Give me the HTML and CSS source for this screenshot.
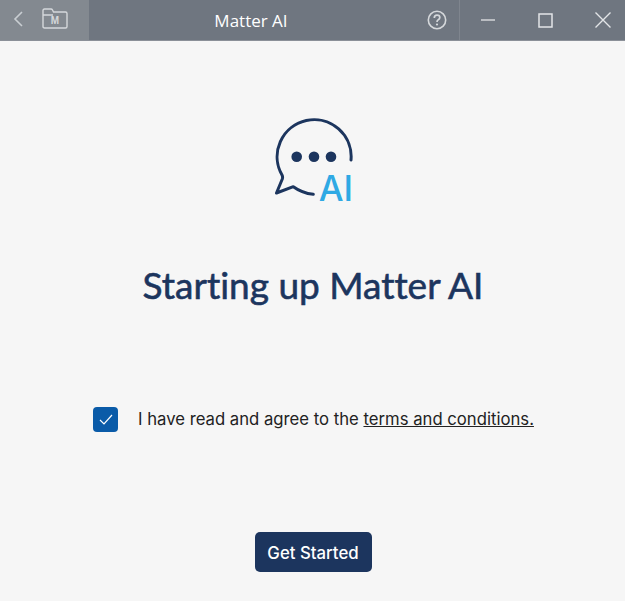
FILE: index.html
```html
<!DOCTYPE html>
<html lang="en">

<head>
    <meta charset="UTF-8">
    <meta name="viewport" content="width=device-width, initial-scale=1.0">
    <title>Matter AI</title>
    <link rel="stylesheet" href="styles.css">
</head>

<body>
    <div class="titlebar">
        <div class="titlebar-nav">
            <svg width="12" height="18" viewBox="0 0 12 18">
                <path d="M10 2 L3 9 L10 16" fill="none" stroke="#c9ced2" stroke-width="1.600" />
            </svg>
            <svg width="26" height="21" viewBox="0 0 26 21">
                <path d="M1 7 V2.500 Q1 1 2.500 1 H9 Q10 1 10.500 2 L11.500 4 H23.500 Q25 4 25 5.500 V18.500 Q25 20 23.500 20 H2.500 Q1 20 1 18.500 V7 H11" fill="none" stroke="#d5d8db" stroke-width="1.400" />
                <text x="13" y="15.500" class="folder-letter">M</text>
            </svg>
        </div>
        <div class="titlebar-title">Matter AI</div>
        <div class="titlebar-help">
            <svg width="20" height="20" viewBox="0 0 20 20">
                <circle cx="10" cy="10" r="8.700" fill="none" stroke="#d5d8db" stroke-width="1.600" />
                <path d="M7.300 7.900 Q7.300 5.200 10 5.200 Q12.800 5.200 12.800 7.500 Q12.800 8.900 11.300 9.700 Q10 10.400 10 12" fill="none" stroke="#d5d8db" stroke-width="1.700" />
                <circle cx="10" cy="14.500" r="1.100" fill="#d5d8db" />
            </svg>
        </div>
        <div class="titlebar-controls">
            <svg width="14" height="14" viewBox="0 0 14 14">
                <path d="M0 7 H14" stroke="#e3e5e7" stroke-width="1.300" />
            </svg>
            <svg width="15" height="15" viewBox="0 0 15 15">
                <rect x="1" y="1" width="13" height="13" fill="none" stroke="#e3e5e7" stroke-width="1.500" />
            </svg>
            <svg width="16" height="16" viewBox="0 0 16 16">
                <path d="M0.500 0.500 L15.500 15.500 M15.500 0.500 L0.500 15.500" stroke="#e3e5e7" stroke-width="1.400" />
            </svg>
        </div>
    </div>

    <div class="content">
        <div class="logo">
            <svg width="82" height="88" viewBox="0 0 82 88">
                <path d="M79 42 A37 37 0 1 0 10 57 Q11 59 10.300 61 L4.500 75 L21.300 68.700 Q30 75 41.300 76.300" fill="none" stroke="#1c355e" stroke-width="3" stroke-linecap="round" stroke-linejoin="round" />
                <circle cx="24.700" cy="38.700" r="5.300" fill="#1c355e" />
                <circle cx="42" cy="38.700" r="5.300" fill="#1c355e" />
                <circle cx="59" cy="38.700" r="5.300" fill="#1c355e" />
            </svg>
            <span class="logo-ai">AI</span>
        </div>

        <h1>Starting up Matter AI</h1>

        <div class="agree">
            <span class="checkbox">
                <svg width="14" height="11" viewBox="0 0 14 11">
                    <path d="M1 6 L5 10 L13 1" fill="none" stroke="#fff" stroke-width="1.200" />
                </svg>
            </span>
            <span>I have read and agree to the <a href="#">terms and conditions.</a></span>
        </div>

        <button class="start-button">Get Started</button>
    </div>
</body>

</html>
```

FILE: styles.css
```css
/* Reset and base styles */
* {
    box-sizing: border-box;
    margin: 0;
    padding: 0;
}

body {
    font-family: Inter, "Liberation Sans", sans-serif;
    color: #222;
    background-color: #f6f6f6;
    overflow: hidden;
}

/* Title bar */
.titlebar {
    display: flex;
    align-items: center;
    height: 41px;
    background-color: #6f7680;
    border-bottom: 1px solid #8b9098;
}

.titlebar-nav {
    display: flex;
    align-items: center;
    gap: 18px;
    width: 89px;
    height: 40px;
    padding-left: 12px;
    padding-bottom: 3px;
    background-color: #838990;
}

.folder-letter {
    font-family: "Liberation Sans", sans-serif;
    font-size: 10px;
    font-weight: 700;
    fill: #d5d8db;
    text-anchor: middle;
}

.titlebar-title {
    width: 324px;
    text-align: center;
    font-family: "Open Sans", sans-serif;
    font-size: 17px;
    color: #fff;
}

.titlebar-help {
    display: flex;
    align-items: center;
    width: 47px;
    height: 40px;
    padding-left: 14px;
    border-right: 1px solid #7f858e;
}

.titlebar-controls {
    display: flex;
    align-items: center;
    justify-content: space-between;
    flex: 1;
    padding: 0 14px 0 21px;
}

/* Content */
.content {
    display: flex;
    flex-direction: column;
    align-items: center;
    padding-top: 77px;
    padding-left: 1px;
}

.logo {
    position: relative;
    width: 82px;
    height: 88px;
}

.logo-ai {
    position: absolute;
    right: 1px;
    bottom: -2px;
    font-family: Inter, sans-serif;
    font-size: 35px;
    font-weight: 500;
    line-height: 40px;
    color: #2fa9e4;
}

h1 {
    margin-top: 55px;
    font-family: Lato, sans-serif;
    font-size: 37px;
    line-height: 48px;
    font-weight: 400;
    font-variant-ligatures: none;
    -webkit-text-stroke: 0.600px #1c355e;
    color: #1c355e;
}

/* Terms row */
.agree {
    display: flex;
    align-items: center;
    gap: 20px;
    width: 442px;
    margin-top: 97px;
    margin-left: 2px;
    font-size: 16.700px;
    line-height: 26px;
}

.agree a {
    color: inherit;
}

.checkbox {
    display: flex;
    align-items: center;
    justify-content: center;
    width: 25px;
    height: 25px;
    background-color: #0a5ba8;
    border-radius: 4px;
}

/* Button */
.start-button {
    margin-top: 100px;
    padding-top: 2px;
    width: 117px;
    height: 40px;
    background-color: #1c355e;
    color: #fff;
    border: none;
    border-radius: 5px;
    font-family: Inter, sans-serif;
    font-size: 16.800px;
    font-weight: 500;
}
```
